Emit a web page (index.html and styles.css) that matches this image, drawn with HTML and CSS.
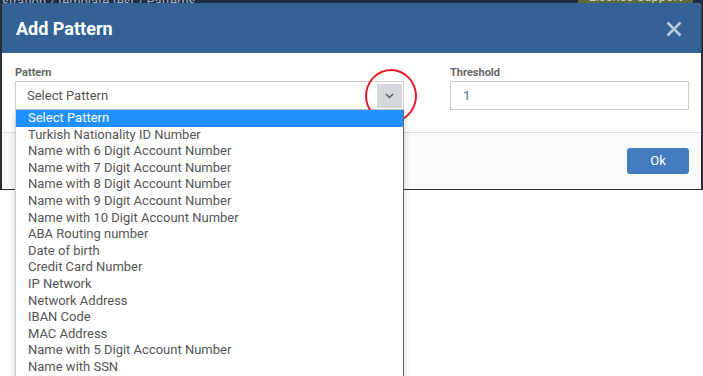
FILE: index.html
```html
<html>
<head>
	<meta http-equiv="Content-Type" content="text/html; charset=utf-8" />
	<title>Add Pattern</title>
	<link rel="stylesheet" href="styles.css">
</head>
<body>
	<div class="backdrop">
		<div class="topbar">
			<span class="crumbs">stration / template test / Patterns</span>
			<span class="license">License Support</span>
		</div>
		<div class="modal">
			<div class="head">
				<div class="title">Add Pattern</div>
				<div class="close">
					<svg width="16" height="16" viewBox="0 0 16 16"><path d="M1.5 1.5L14.5 14.5M14.5 1.5L1.5 14.5" stroke="#b9c8dc" stroke-width="2.6" fill="none"/></svg>
				</div>
			</div>
			<div class="body">
				<div class="field pattern">
					<div class="label">Pattern</div>
					<div class="select">
						<span>Select Pattern</span>
						<div class="arrow">
							<svg width="9" height="6" viewBox="0 0 9 6"><path d="M1 1L4.5 4.5L8 1" stroke="#666" stroke-width="1.6" fill="none"/></svg>
						</div>
					</div>
				</div>
				<div class="field threshold">
					<div class="label">Threshold</div>
					<div class="input">1</div>
				</div>
			</div>
			<div class="foot">
				<div class="ok">Ok</div>
			</div>
		</div>
	</div>

	<div class="mark"></div>

	<div class="list">
		<div class="opt selected">Select Pattern</div>
		<div class="opt">Turkish Nationality ID Number</div>
		<div class="opt">Name with 6 Digit Account Number</div>
		<div class="opt">Name with 7 Digit Account Number</div>
		<div class="opt">Name with 8 Digit Account Number</div>
		<div class="opt">Name with 9 Digit Account Number</div>
		<div class="opt">Name with 10 Digit Account Number</div>
		<div class="opt">ABA Routing number</div>
		<div class="opt">Date of birth</div>
		<div class="opt">Credit Card Number</div>
		<div class="opt">IP Network</div>
		<div class="opt">Network Address</div>
		<div class="opt">IBAN Code</div>
		<div class="opt">MAC Address</div>
		<div class="opt">Name with 5 Digit Account Number</div>
		<div class="opt">Name with SSN</div>
	</div>
</body>
</html>
```

FILE: styles.css
```css
body {
	margin: 0;
	background: #ffffff;
	font-family: 'Roboto', 'Liberation Sans', sans-serif;
	overflow: hidden;
}
.backdrop {
	background: #2c2f35;
	height: 190px;
	padding: 0 2px 0 2px;
	box-sizing: border-box;
}
.topbar {
	height: 3px;
	background: #1d2c47;
	margin: 0 -2px;
	position: relative;
	overflow: hidden;
}
.topbar .crumbs {
	position: absolute;
	left: 2px;
	bottom: -6px;
	font-size: 13px;
	color: #a9b0bd;
}
.topbar .license {
	position: absolute;
	left: 578px;
	width: 115px;
	bottom: -6px;
	height: 20px;
	background: #5d6b3a;
	color: #c9d0b8;
	font-size: 13px;
	text-align: center;
}
.modal {
	background: #ffffff;
	border-radius: 4px 4px 0 0;
	height: 186px;
	display: flex;
	flex-direction: column;
	overflow: hidden;
}
.head {
	height: 50px;
	background: #346297;
	display: flex;
	align-items: center;
	justify-content: space-between;
	padding: 0 19px 0 14px;
}
.title {
	color: #ffffff;
	font-size: 18px;
	font-weight: bold;
}
.close {
	display: flex;
	padding-top: 2px;
}
.body {
	height: 80px;
	display: flex;
	padding: 13px 12px 0 13px;
	box-sizing: border-box;
	border-bottom: 1px solid #dddddd;
}
.label {
	font-size: 11px;
	font-weight: bold;
	color: #666666;
	height: 15px;
	line-height: 13px;
}
.pattern {
	width: 389px;
}
.threshold {
	width: 239px;
	margin-left: 46px;
}
.select, .input {
	height: 29px;
	border: 1px solid #cccccc;
	box-sizing: border-box;
	display: flex;
	align-items: center;
	font-size: 13px;
	color: #555555;
}
.select {
	padding: 0 0 0 11px;
	justify-content: space-between;
}
.arrow {
	width: 25px;
	height: 24px;
	margin-right: 1px;
	background: #d5d8dc;
	display: flex;
	align-items: center;
	justify-content: center;
}
.input {
	padding-left: 12px;
	color: #3f6fa8;
}
.foot {
	flex: 1;
	background: #fafafa;
	display: flex;
	justify-content: flex-end;
	align-items: flex-start;
	padding: 15px 12px 0 0;
}
.ok {
	width: 62px;
	height: 26px;
	line-height: 26px;
	background: #427cbf;
	border-radius: 3px;
	color: #ffffff;
	font-size: 13px;
	text-align: center;
}
.mark {
	position: absolute;
	left: 365px;
	top: 69px;
	width: 48px;
	height: 50px;
	border: 2.5px solid #e41e26;
	border-radius: 50%;
}
.list {
	position: absolute;
	left: 15px;
	top: 110px;
	width: 389px;
	height: 280px;
	background: #ffffff;
	border-left: 1px solid #cfcfcf;
	border-right: 1px solid #666666;
	box-sizing: border-box;
	box-shadow: 0 2px 8px rgba(0, 0, 0, 0.18);
}
.opt {
	height: 16.6px;
	line-height: 16.6px;
	font-size: 13px;
	color: #555555;
	padding-left: 12px;
	white-space: nowrap;
}
.opt.selected {
	background: #1e90ff;
	color: #ffffff;
}
```
